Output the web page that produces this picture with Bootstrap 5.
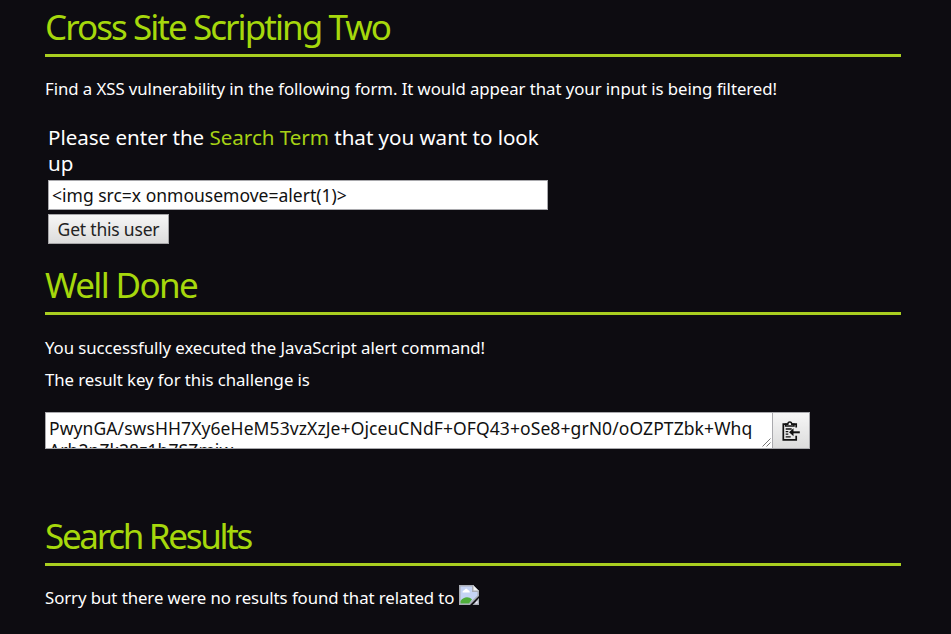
<!DOCTYPE html>
<html lang="en">
<head>
<meta charset="utf-8">
<meta name="viewport" content="width=device-width, initial-scale=1">
<title>Cross Site Scripting Two</title>
<link href="https://cdn.jsdelivr.net/npm/bootstrap@5.3.0/dist/css/bootstrap.min.css" rel="stylesheet">
<style>
body{background:#0d0c11;color:#fff;font-family:"Noto Sans","Open Sans",sans-serif;font-size:16.8px;letter-spacing:-.06px;height:634px;overflow:hidden}
.page{width:856px;margin-left:45px}
.title{color:#a6d80c;font-size:35px;font-weight:400;letter-spacing:-1.95px;line-height:54px;height:57px;border-bottom:3px solid #a9cf20;white-space:nowrap}
.title-done{letter-spacing:-1.65px}
.title-results{letter-spacing:-2.3px}
.line{line-height:32px;height:32px;white-space:nowrap}
.after-title{margin-top:17px}
.search-form{margin:19px 0 14px 3px;gap:4px}
.ask{font-size:20.6px;line-height:26px;letter-spacing:-.04px;white-space:nowrap}
.ask em{font-style:normal;color:#a6d115}
.term{width:500px;height:30px;border:1px solid #a9a9ad;border-radius:0;color:#111;background:#fff;font-size:17.5px;letter-spacing:0;line-height:28px;padding:0 3px}
.go{width:121px;height:30px;border:1px solid #a6a6a8;border-radius:0;background:linear-gradient(#f6f6f6,#dcdcdc);color:#222;font-size:17.5px;letter-spacing:-.2px;line-height:28px;white-space:nowrap}
.key-row{margin:16px 0 60px}
.key{display:block;width:728px;height:37px;border:1px solid #a9a9ad;border-radius:0;background:#fff;color:#111;font-size:17.5px;letter-spacing:.09px;line-height:22px;padding:4px 3px 0;overflow:hidden;white-space:pre;resize:none}
.copy{width:37px;height:37px;border:1px solid #a9a9ad;border-left:0;border-radius:0;background:linear-gradient(#f6f6f6,#dcdcdc)}
.grip{right:2px;bottom:2px}
.broken{vertical-align:-1px}
</style>
<script src="https://cdn.jsdelivr.net/npm/bootstrap@5.3.0/dist/js/bootstrap.bundle.min.js"></script>
</head>
<body>
<main class="page">
  <h1 class="title mb-0">Cross Site Scripting Two</h1>
  <p class="line mb-0 mt-3">Find a XSS vulnerability in the following form. It would appear that your input is being filtered!</p>
  <form class="search-form d-flex flex-column align-items-start">
    <label class="ask" for="term">Please enter the <em>Search Term</em> that you want to look<br>up</label>
    <input id="term" class="term form-control" type="text" value="&lt;img src=x onmousemove=alert(1)&gt;">
    <button class="go btn p-0" type="button">Get this user</button>
  </form>
  <h2 class="title title-done mb-0">Well Done</h2>
  <p class="line after-title mb-0">You successfully executed the JavaScript alert command!</p>
  <p class="line mb-0">The result key for this challenge is</p>
  <div class="key-row d-flex">
    <div class="position-relative">
      <textarea class="key" aria-label="Result key" readonly>PwynGA/swsHH7Xy6eHeM53vzXzJe+OjceuCNdF+OFQ43+oSe8+grN0/oOZPTZbk+Whq
Arh2pZk28z1h7SZmiw</textarea>
      <svg class="grip position-absolute" width="9" height="9" viewBox="0 0 9 9" stroke="#777" stroke-width="1" fill="none"><path d="M.5 8.5l8-8M4.5 8.5l4-4"/></svg>
    </div>
    <button class="copy btn p-0 d-flex align-items-center justify-content-center" type="button" aria-label="Copy to clipboard">
      <svg width="18" height="20" viewBox="0 0 18 20" fill="none" stroke="#111" stroke-width="1.7"><path d="M14.2 6.5V3.2H1.3v15.6h12.9v-4"/><path d="M3.600 5V3.200h2.200C5.900 1.700 6.600 1 7.800 1s1.900.7 2 2.200h2.200V5z" fill="#eee" stroke-width="1.5"/><path d="M3.700 8h6M3.700 10.600h2.600M3.700 13.200h2.600M3.700 15.800h5" stroke-width="1.300"/><path d="M9 11.300h8.800" stroke-width="2"/><path d="M7 11.300l4.500-4v8z" fill="#111" stroke="none"/></svg>
    </button>
  </div>
  <h2 class="title title-results mb-0">Search Results</h2>
  <p class="line mb-0 mt-3">Sorry but there were no results found that related to
    <svg class="broken" width="20" height="20" viewBox="0 0 20 20"><path d="M0 0h14l6 6v5L11 20H0z" fill="#a9adb5"/><path d="M1.500 1.500H13V7h5.500v3.500L10 18.500H1.500z" fill="#c5d4f5"/><path d="M3.500 7.500c0-2 1.500-2 2-2.500.8-1.800 3-1.500 3.300 0 1.200 0 2 1 2 2.500z" fill="#fff"/><path d="M1.500 18.500V16c3-4 8-5 11.500-1.500l-3 4z" fill="#4fae3b"/><path d="M14 0l6 6h-6z" fill="#f4f4f4" stroke="#a9adb5"/><path d="M20 13v7h-6.500z" fill="#a9adb5"/><path d="M18.600 15.500v3h-2.800z" fill="#eef"/></svg></p>
</main>
</body>
</html>
